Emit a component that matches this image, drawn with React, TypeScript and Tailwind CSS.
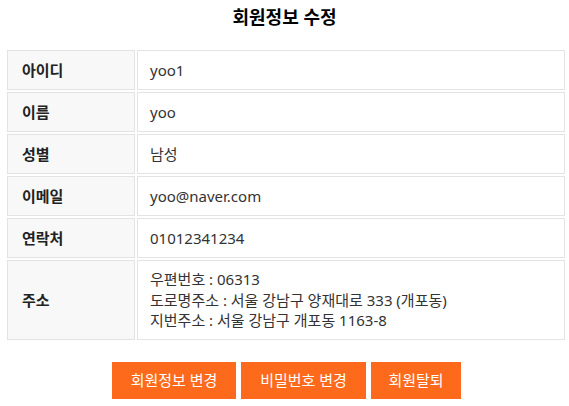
const rows = [
  { label: "아이디", value: ["yoo1"] },
  { label: "이름", value: ["yoo"] },
  { label: "성별", value: ["남성"] },
  { label: "이메일", value: ["yoo@naver.com"] },
  { label: "연락처", value: ["01012341234"] },
  {
    label: "주소",
    value: [
      "우편번호 : 06313",
      "도로명주소 : 서울 강남구 양재대로 333 (개포동)",
      "지번주소 : 서울 강남구 개포동 1163-8",
    ],
  },
];

export default function App() {
  return (
    <div
      className="w-[569px] h-[406px] bg-white text-[#333]"
      style={{ fontFamily: '"Noto Sans", "Noto Sans CJK KR", sans-serif' }}
    >
      <h1 className="pt-[4px] h-[50px] text-center text-[18px] leading-[26px] font-bold text-black">
        회원정보 수정
      </h1>

      <div className="ml-[7px] w-[558px] grid grid-cols-[128px_1fr] gap-[2px]">
        {rows.map((r) => (
          <div key={r.label} className="contents">
            <div
              className={`flex items-center pl-[14px] border border-[#e3e3e3] bg-[#f8f8f8] text-[15px] font-semibold text-[#222] ${
                r.value.length > 1 ? "h-[80px]" : "h-[40px]"
              }`}
            >
              {r.label}
            </div>
            <div className="flex flex-col justify-center pl-[12px] border border-[#e3e3e3] text-[15px] leading-[20.5px]">
              {r.value.map((v) => (
                <div key={v}>{v}</div>
              ))}
            </div>
          </div>
        ))}
      </div>

      <div className="mt-[22px] ml-[112px] flex gap-[5px]">
        <button className="h-[37px] w-[124px] bg-[#fd6a1b] text-white text-[15px]">
          회원정보 변경
        </button>
        <button className="h-[37px] w-[125px] bg-[#fd6a1b] text-white text-[15px]">
          비밀번호 변경
        </button>
        <button className="h-[37px] w-[90px] bg-[#fd6a1b] text-white text-[15px]">
          회원탈퇴
        </button>
      </div>
    </div>
  );
}
